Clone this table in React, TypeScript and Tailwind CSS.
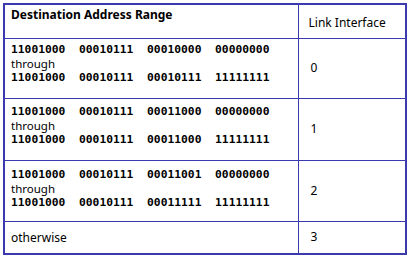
const rows = [
  { from: "11001000  00010111  00010000  00000000", to: "11001000  00010111  00010111  11111111", link: "0", h: "h-[60px]", pt: "pt-[4px]" },
  { from: "11001000  00010111  00011000  00000000", to: "11001000  00010111  00011000  11111111", link: "1", h: "h-[62px]", pt: "pt-[6px]" },
  { from: "11001000  00010111  00011001  00000000", to: "11001000  00010111  00011111  11111111", link: "2", h: "h-[61px]", pt: "pt-[7px]" },
];

const sans = "font-['Noto_Sans','Liberation_Sans',sans-serif]";
const mono = "font-['DejaVu_Sans_Mono','Liberation_Mono',monospace] font-bold text-[11.3px] leading-[14px] whitespace-pre";

export default function App() {
  return (
    <div className="h-[263px] w-[412px] bg-white pl-[3px] pt-[3px]">
      <table className={`w-[402px] table-fixed border-collapse border-2 border-[#3a3aae] text-black ${sans}`}>
        <colgroup>
          <col className="w-[294px]" />
          <col className="w-[108px]" />
        </colgroup>
        <tbody>
          <tr className="h-[34px]">
            <td className="border border-[#3a3aae] px-[6px] pb-[12px] align-middle text-[12px] font-bold">
              Destination Address Range
            </td>
            <td className="border border-[#3a3aae] pl-[10px] pt-[4px] align-middle text-[12px]">
              Link Interface
            </td>
          </tr>
          {rows.map((r) => (
            <tr key={r.link} className={r.h}>
              <td className={`border border-[#3a3aae] px-[6px] align-top ${r.pt}`}>
                <div className={mono}>{r.from}</div>
                <div className="h-[14px] text-[11.5px] leading-[13px]">through</div>
                <div className={mono}>{r.to}</div>
              </td>
              <td className="border border-[#3a3aae] pl-[12px] align-middle text-[12px]">{r.link}</td>
            </tr>
          ))}
          <tr className="h-[33px]">
            <td className="border border-[#3a3aae] px-[6px] pt-[2px] align-middle text-[12px]">otherwise</td>
            <td className="border border-[#3a3aae] pl-[12px] align-middle text-[12px]">3</td>
          </tr>
        </tbody>
      </table>
    </div>
  );
}
